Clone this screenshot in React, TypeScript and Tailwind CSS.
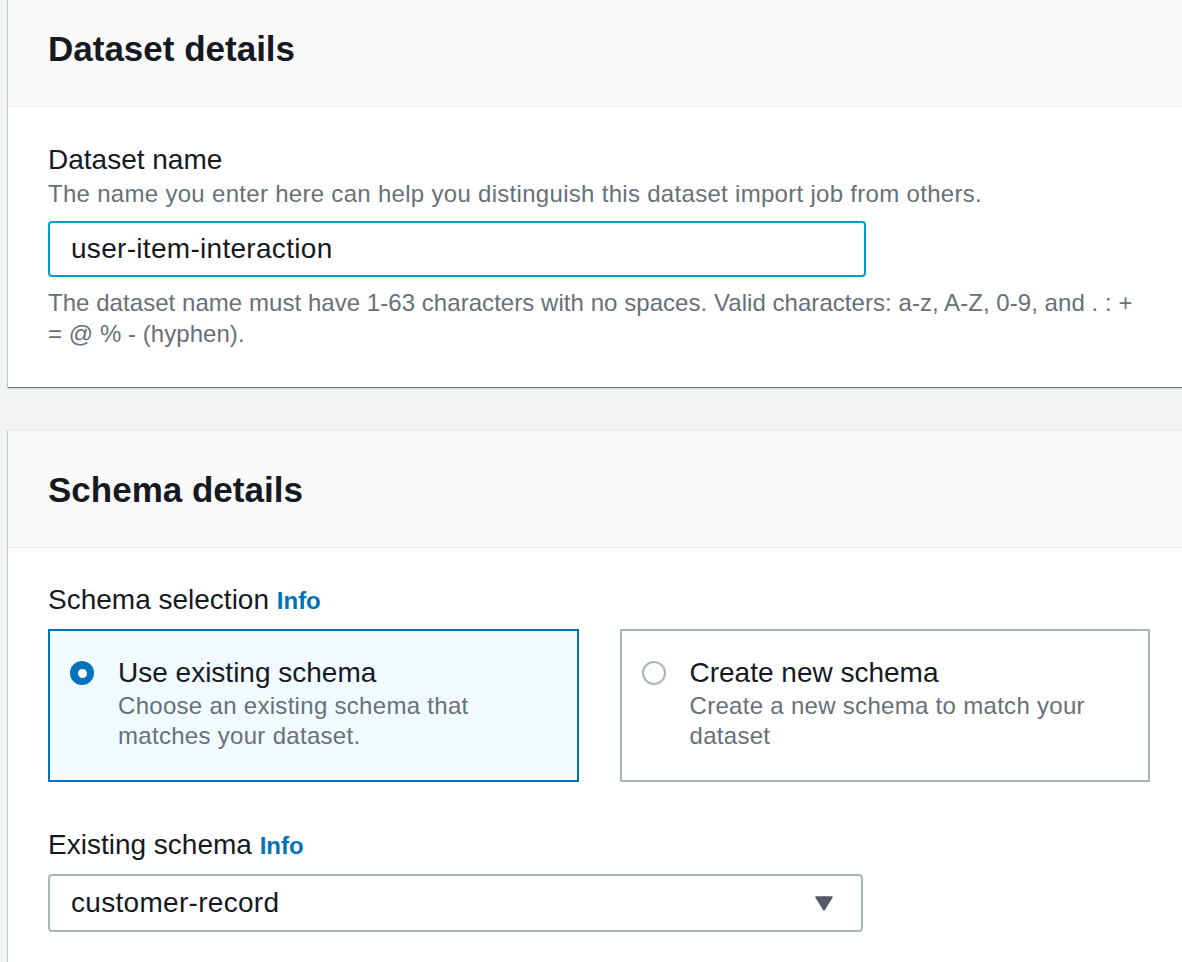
import React from "react";

function Radio({ checked }: { checked: boolean }) {
  return checked ? (
    <span className="flex h-[24px] w-[24px] shrink-0 items-center justify-center rounded-full bg-[#0073bb]">
      <span className="block h-[9px] w-[9px] rounded-full bg-white" />
    </span>
  ) : (
    <span className="block h-[24px] w-[24px] shrink-0 rounded-full border-2 border-[#aab7b8] bg-white" />
  );
}

function Tile({ checked, title, desc }: { checked: boolean; title: string; desc: string }) {
  return (
    <div
      className={
        checked
          ? "flex h-[153px] gap-[24px] border-2 border-[#0073bb] bg-[#f1faff] pl-[20px] pt-[24px]"
          : "flex h-[153px] gap-[24px] border-2 border-[#aab7b8] bg-white pl-[20px] pt-[24px]"
      }
    >
      <div className="pt-[6px]">
        <Radio checked={checked} />
      </div>
      <div className="max-w-[410px]">
        <div className="text-[28px] leading-[36px] text-[#16191f]">{title}</div>
        <div className="text-[24px] leading-[30px] tracking-[0.3px] text-[#687078]">{desc}</div>
      </div>
    </div>
  );
}

function Card({ title, children, className }: { title: string; children: React.ReactNode; className?: string }) {
  return (
    <div
      className={
        "w-[1182px] bg-white shadow-[0_1px_1px_0_rgba(0,28,36,0.4),1px_1px_1px_0_rgba(0,28,36,0.15),-1px_1px_1px_0_rgba(0,28,36,0.15)] border-t border-[#eaeded] " +
        (className ?? "")
      }
    >
      <div className="flex h-[117px] items-center border-b border-[#eaeded] bg-[#fafafa] px-[40px] pt-[1px]">
        <h2 className="text-[35px] font-bold leading-[40px] text-[#16191f]">{title}</h2>
      </div>
      {children}
    </div>
  );
}

export default function App() {
  return (
    <div
      className="h-[962px] w-[1182px] overflow-hidden bg-[#f2f3f3] pl-[8px]"
      style={{ fontFamily: '"Liberation Sans", Arial, sans-serif' }}
    >
      <Card title="Dataset details" className="-mt-[11px]">
        <div className="px-[40px] pb-[38px] pt-[35px]">
          <div className="text-[28px] leading-[36px] text-[#16191f]">Dataset name</div>
          <div className="text-[24px] leading-[32px] tracking-[0.3px] text-[#687078]">
            The name you enter here can help you distinguish this dataset import job from others.
          </div>
          <div className="mt-[11px] flex h-[56px] w-[818px] items-center rounded-[4px] border-2 border-[#00a1c9] px-[21px] text-[28px] tracking-[0.3px] text-[#16191f]">
            user-item-interaction
          </div>
          <div className="mt-[10px] text-[24px] leading-[31px] tracking-[0.05px] text-[#687078]">
            The dataset name must have 1-63 characters with no spaces. Valid characters: a-z, A-Z, 0-9, and . : + = @ % - (hyphen).
          </div>
        </div>
      </Card>
      <Card title="Schema details" className="mt-[43px]">
        <div className="px-[40px] pb-[60px] pt-[34px]">
          <div className="text-[28px] leading-[36px] text-[#16191f]">
            Schema selection <span className="text-[24px] font-bold text-[#0073bb]">Info</span>
          </div>
          <div className="mt-[10px] grid grid-cols-2 gap-[41px]">
            <Tile checked title="Use existing schema" desc="Choose an existing schema that matches your dataset." />
            <Tile checked={false} title="Create new schema" desc="Create a new schema to match your dataset" />
          </div>
          <div className="mt-[45px] text-[28px] leading-[36px] text-[#16191f]">
            Existing schema <span className="text-[24px] font-bold text-[#0073bb]">Info</span>
          </div>
          <div className="mt-[10px] flex h-[58px] w-[815px] items-center justify-between rounded-[4px] border-2 border-[#aab7b8] pl-[21px] pr-[28px] text-[28px] tracking-[0.3px] text-[#16191f]">
            <span>customer-record</span>
            <svg width="18" height="15" viewBox="0 0 18 15">
              <path d="M1 1 H17 L9 14 Z" fill="#545b64" stroke="#545b64" strokeWidth="1.5" strokeLinejoin="round" />
            </svg>
          </div>
        </div>
      </Card>
    </div>
  );
}
